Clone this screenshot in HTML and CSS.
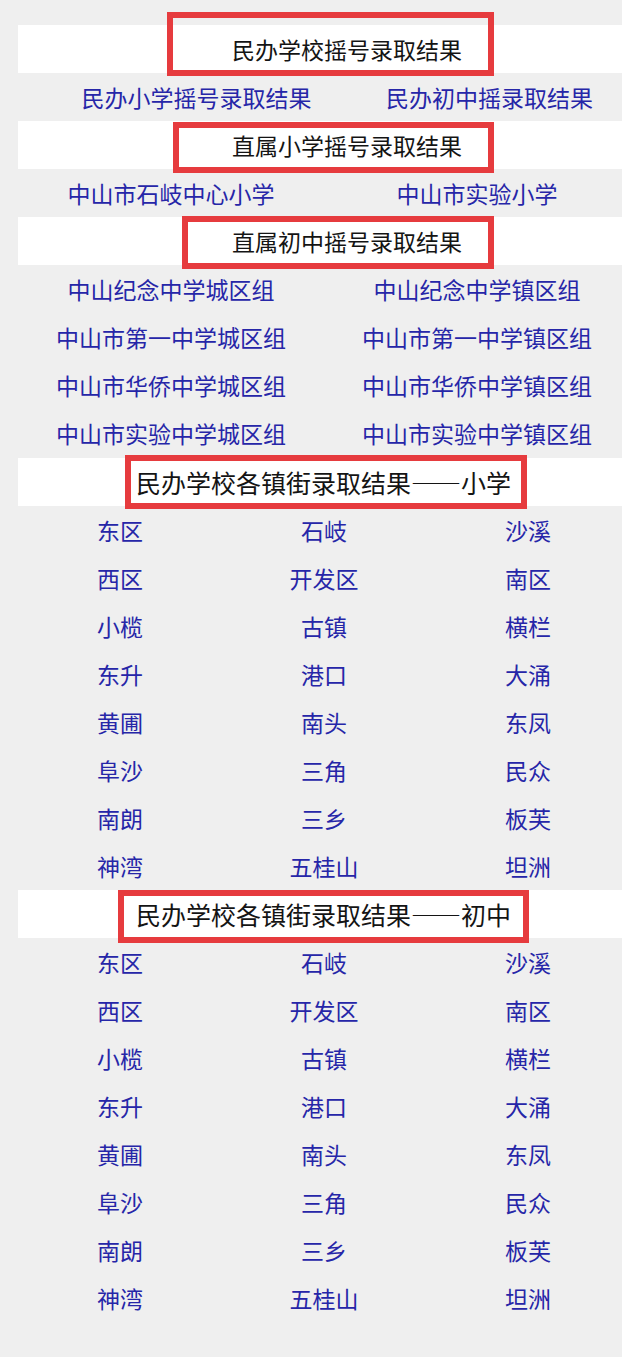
FILE: index.html
```html
<!DOCTYPE html>
<html lang="zh-CN">
<head>
<meta charset="utf-8">
<title>录取结果</title>
<link rel="stylesheet" href="styles.css">
</head>
<body>
<div class="page">
  <div class="band band-a">
    <span class="mark mark-1"></span>
    <span class="band-text">民办学校摇号录取结果</span>
  </div>
  <div class="row row-first">
    <a class="cell">民办小学摇号录取结果</a>
    <a class="cell">民办初中摇录取结果</a>
  </div>

  <div class="band band-a">
    <span class="mark mark-2"></span>
    <span class="band-text">直属小学摇号录取结果</span>
  </div>
  <div class="row row-two">
    <a class="cell">中山市石岐中心小学</a>
    <a class="cell">中山市实验小学</a>
  </div>

  <div class="band band-a">
    <span class="mark mark-3"></span>
    <span class="band-text">直属初中摇号录取结果</span>
  </div>
  <div class="row row-two">
    <a class="cell">中山纪念中学城区组</a>
    <a class="cell">中山纪念中学镇区组</a>
  </div>
  <div class="row row-two">
    <a class="cell">中山市第一中学城区组</a>
    <a class="cell">中山市第一中学镇区组</a>
  </div>
  <div class="row row-two">
    <a class="cell">中山市华侨中学城区组</a>
    <a class="cell">中山市华侨中学镇区组</a>
  </div>
  <div class="row row-two">
    <a class="cell">中山市实验中学城区组</a>
    <a class="cell">中山市实验中学镇区组</a>
  </div>

  <div class="band band-b band-4">
    <span class="mark mark-4"></span>
    <span class="band-text">民办学校各镇街录取结果——小学</span>
  </div>
  <div class="grid-three">
    <a class="cell">东区</a><a class="cell">石岐</a><a class="cell">沙溪</a>
    <a class="cell">西区</a><a class="cell">开发区</a><a class="cell">南区</a>
    <a class="cell">小榄</a><a class="cell">古镇</a><a class="cell">横栏</a>
    <a class="cell">东升</a><a class="cell">港口</a><a class="cell">大涌</a>
    <a class="cell">黄圃</a><a class="cell">南头</a><a class="cell">东凤</a>
    <a class="cell">阜沙</a><a class="cell">三角</a><a class="cell">民众</a>
    <a class="cell">南朗</a><a class="cell">三乡</a><a class="cell">板芙</a>
    <a class="cell">神湾</a><a class="cell">五桂山</a><a class="cell">坦洲</a>
  </div>

  <div class="band band-b">
    <span class="mark mark-5"></span>
    <span class="band-text">民办学校各镇街录取结果——初中</span>
  </div>
  <div class="grid-three">
    <a class="cell">东区</a><a class="cell">石岐</a><a class="cell">沙溪</a>
    <a class="cell">西区</a><a class="cell">开发区</a><a class="cell">南区</a>
    <a class="cell">小榄</a><a class="cell">古镇</a><a class="cell">横栏</a>
    <a class="cell">东升</a><a class="cell">港口</a><a class="cell">大涌</a>
    <a class="cell">黄圃</a><a class="cell">南头</a><a class="cell">东凤</a>
    <a class="cell">阜沙</a><a class="cell">三角</a><a class="cell">民众</a>
    <a class="cell">南朗</a><a class="cell">三乡</a><a class="cell">板芙</a>
    <a class="cell">神湾</a><a class="cell">五桂山</a><a class="cell">坦洲</a>
  </div>
</div>
</body>
</html>
```
FILE: styles.css
```css
html, body {
  margin: 0;
  padding: 0;
  background: #efefef;
  overflow-x: hidden;
}
body {
  font-family: "Noto Sans CJK SC", "Noto Sans", sans-serif;
  height: 1357px;
}
.page {
  width: 612px;
  margin-left: 18px;
  padding-top: 25px;
}
.band {
  position: relative;
  height: 48px;
  background: #ffffff;
  display: flex;
  align-items: center;
  color: #141414;
}
.band-text {
  position: relative;
  z-index: 1;
  line-height: 1;
}
.band-a .band-text {
  padding-left: 214px;
  font-size: 23px;
}
.band-b .band-text {
  padding-left: 118px;
  font-size: 25px;
}
.band-4 {
  margin-top: 1px;
}
.mark {
  position: absolute;
  border: 6px solid #e63b3e;
  box-sizing: border-box;
}
.mark-1 { left: 149px; top: -13px; width: 327px; height: 64px; }
.mark-2 { left: 155px; top: 1px;   width: 321px; height: 51px; }
.mark-3 { left: 164px; top: -1px;  width: 312px; height: 53px; }
.mark-4 { left: 107px; top: -3px;  width: 402px; height: 54px; }
.mark-5 { left: 100px; top: 0;     width: 411px; height: 53px; }

.row, .grid-three {
  display: grid;
}
.row-first { grid-template-columns: 357px 229px; }
.row-two { grid-template-columns: 306px 306px; }
.grid-three { grid-template-columns: 204px 204px 204px; }
.cell {
  height: 48px;
  line-height: 48px;
  text-align: center;
  font-size: 23px;
  color: #2626a8;
  text-decoration: none;
  white-space: nowrap;
}
```
